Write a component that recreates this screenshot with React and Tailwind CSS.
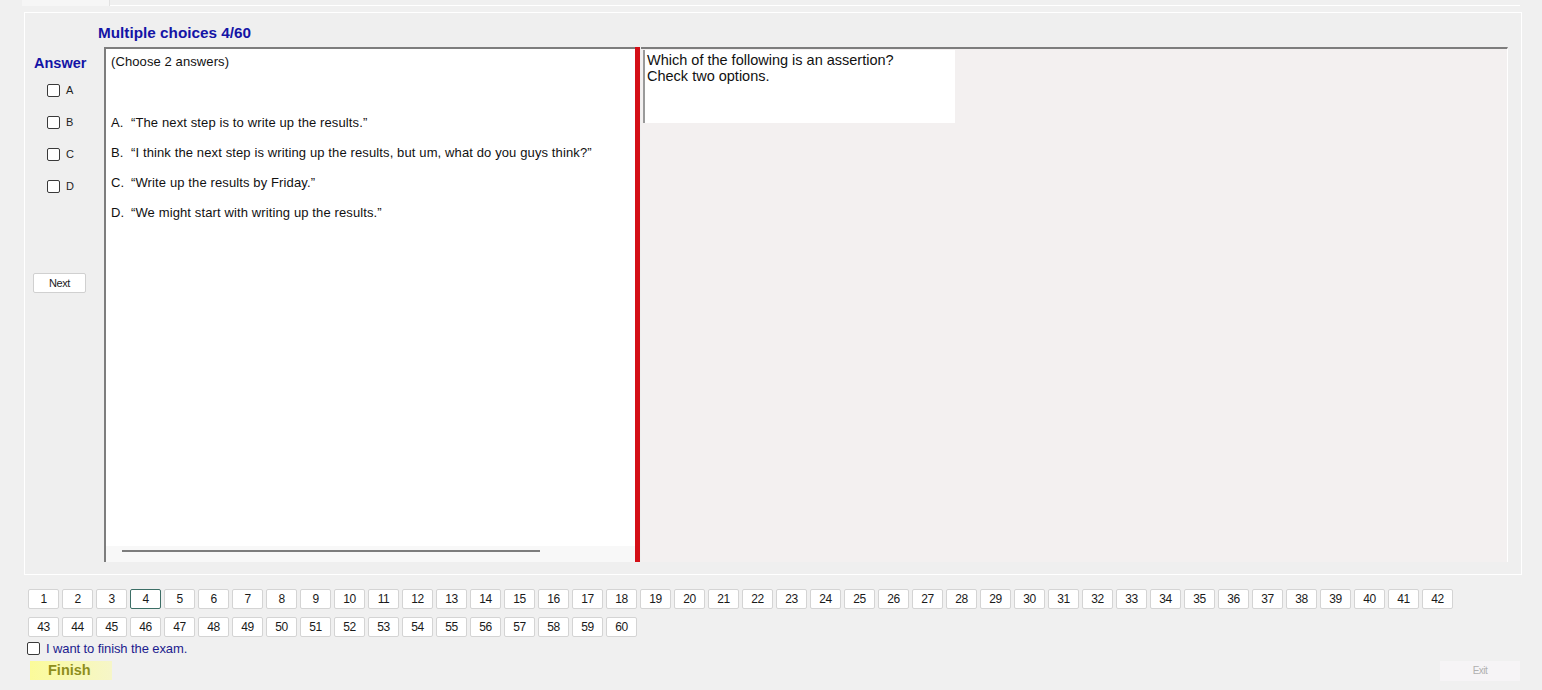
const options = [
  { key: "A", text: "\u201CThe next step is to write up the results.\u201D" },
  { key: "B", text: "\u201CI think the next step is writing up the results, but um, what do you guys think?\u201D" },
  { key: "C", text: "\u201CWrite up the results by Friday.\u201D" },
  { key: "D", text: "\u201CWe might start with writing up the results.\u201D" },
];

const row1 = Array.from({ length: 42 }, (_, i) => i + 1);
const row2 = Array.from({ length: 18 }, (_, i) => i + 43);

function Box() {
  return <span className="inline-block h-[13px] w-[13px] shrink-0 rounded-[2px] border border-[#3a3a3a] bg-white" />;
}

function NavButton({ n }) {
  const current = n === 4;
  return (
    <button
      type="button"
      className={
        "flex h-[20px] w-[31px] items-center justify-center rounded-[2px] bg-white text-[12px] tracking-[-0.5px] text-[#1a1a1a] " +
        (current ? "border border-[#3c6e66]" : "border border-[#d4d4d4]")
      }
    >
      {n}
    </button>
  );
}

export default function App() {
  return (
    <div className="h-[690px] w-[1542px] overflow-hidden bg-[#f0f0f0] font-['Liberation_Sans',Arial,sans-serif]">
      {/* tab strip */}
      <div className="flex h-[6px]">
        <div className="w-[22px]" />
        <div className="w-[88px] border-r border-[#e2e2e2] bg-[#f6f6f6]" />
        <div className="mr-[22px] flex-1 border-b border-white" />
      </div>

      {/* main panel */}
      <div className="ml-[24px] mt-[6px] flex h-[563px] w-[1498px] flex-col border border-white bg-[#efefef]">
        <div className="h-[34px] pl-[73px] pt-[11px] text-[15.3px] font-bold leading-[17px] text-[#1414a6]">
          Multiple choices 4/60
        </div>

        <div className="flex h-[515px]">
          {/* answer column */}
          <div className="flex w-[79px] flex-col">
            <div className="pl-[9px] pt-[8px] text-[14.5px] font-bold leading-[17px] text-[#1414a6]">Answer</div>
            <div className="mt-[12px] flex flex-col gap-[19px] pl-[22px]">
              {options.map((o) => (
                <div key={o.key} className="flex h-[13px] items-center gap-[6px] text-[11px] text-[#222]">
                  <Box />
                  <span>{o.key}</span>
                </div>
              ))}
            </div>
            <button
              type="button"
              className="ml-[8px] mt-[80px] h-[20px] w-[53px] rounded-[2px] border border-[#d0d0d0] bg-white text-[11px] tracking-[-0.4px] text-[#222]"
            >
              Next
            </button>
          </div>

          {/* question text panel */}
          <div className="flex w-[531px] flex-col border-l-2 border-t-2 border-[#7d7d7d] bg-white">
            <div className="flex-1 pl-[5px] pt-[5px] text-[13px] text-[#111]">
              <div className="leading-[15px] tracking-[0.1px]">(Choose 2 answers)</div>
              <div className="mt-[46px] flex flex-col gap-[15px]">
                {options.map((o) => (
                  <div key={o.key} className="flex leading-[15px] tracking-[0.12px]">
                    <span className="w-[20px]">{o.key}.</span>
                    <span>{o.text}</span>
                  </div>
                ))}
              </div>
            </div>
            <div className="flex h-[16px] items-start bg-[#f8f8f8] pl-[16px] pt-[4px]">
              <div className="h-[2px] w-[418px] bg-[#7d7d7d]" />
            </div>
          </div>

          {/* splitter */}
          <div className="w-[5px] bg-[#d40f17]" />

          {/* right panel */}
          <div className="ml-[1px] w-[867px] border-r border-t-2 border-r-white border-t-[#7d7d7d] bg-[#f3f0f0] pl-[2px] pt-[1px]">
            <div className="h-[73px] w-[312px] border-l-2 border-[#9a9a9a] bg-white pl-[2px] pt-[2px] text-[14.5px] leading-[16px] text-[#111]">
              <div>Which of the following is an assertion?</div>
              <div>Check two options.</div>
            </div>
          </div>
        </div>
      </div>

      {/* question navigation */}
      <div className="ml-[28px] mt-[14px] flex flex-col gap-[8px]">
        <div className="flex gap-[3px]">
          {row1.map((n) => (
            <NavButton key={n} n={n} />
          ))}
        </div>
        <div className="flex gap-[3px]">
          {row2.map((n) => (
            <NavButton key={n} n={n} />
          ))}
        </div>
      </div>

      <div className="ml-[27px] mt-[2px] flex items-center gap-[6px]">
        <Box />
        <span className="text-[13px] tracking-[-0.1px] text-[#1c1c8e]">I want to finish the exam.</span>
      </div>

      <div className="mt-[2px] flex items-center justify-between pl-[30px] pr-[22px]">
        <div className="flex h-[19px] w-[82px] items-center bg-gradient-to-r from-[#fbfb9a] to-[#f6f6c8] pl-[18px] text-[14.5px] font-bold text-[#8e8e1c]">
          Finish
        </div>
        <div className="flex h-[20px] w-[80px] items-center justify-center bg-[#f6f4f6] text-[10px] tracking-[-0.5px] text-[#b0b0b0]">
          Exit
        </div>
      </div>
    </div>
  );
}
